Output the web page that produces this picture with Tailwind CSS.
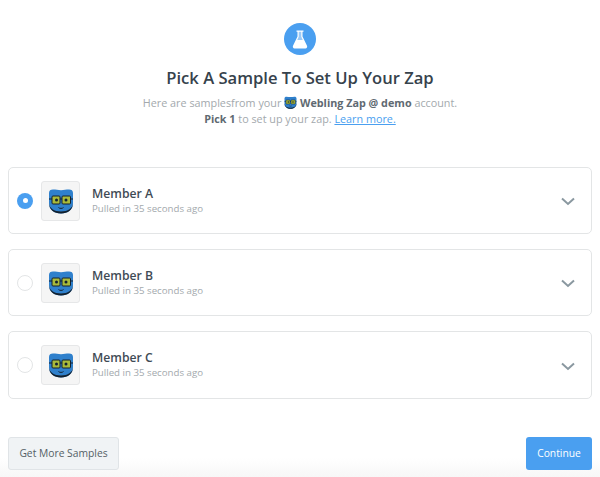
<!DOCTYPE html>
<html lang="en">
<head>
  <meta charset="UTF-8" />
  <title>Pick A Sample</title>
  <script src="https://cdn.jsdelivr.net/npm/@tailwindcss/browser@4"></script>
</head>
<body class="bg-white font-['Open_Sans',sans-serif] text-[#3f4b55]">
  <svg class="hidden">
    <symbol id="bot" viewBox="0 0 26 26">
      <path d="M1 5C1 2.500 2.500 1.500 5 1.500c3 0 5 .7 8 .7s5-.7 8-.7c2.500 0 4 1 4 3.500V15c0 6.500-5 10.500-12 10.500S1 21.500 1 15z" fill="#2f80cc"/>
      <path d="M1 15c.5 5.500 5 8.500 12 8.500S24.500 20.500 25 15c0 6.500-5 10.500-12 10.500S1 21.500 1 15z" fill="#14212e"/>
      <path d="M1 11h3M12 11h2M23 11h2" stroke="#14212e" stroke-width="1"/>
      <rect x="4" y="8" width="8" height="8" rx="1" fill="#a9ba3a" stroke="#14212e" stroke-width="1"/>
      <rect x="14" y="8" width="8.500" height="8" rx="1" fill="#a9ba3a" stroke="#14212e" stroke-width="1"/>
      <circle cx="8.500" cy="12" r="1.500" fill="#14212e"/>
      <circle cx="18" cy="12" r="1.500" fill="#14212e"/>
      <path d="M10.500 19.500c1 1.200 4 1.200 5 0" fill="none" stroke="#14212e" stroke-width="1"/>
    </symbol>
  </svg>

  <main class="flex h-[477px] flex-col overflow-hidden bg-gradient-to-b from-white from-[96%] to-[#f7f7f7] px-2 pt-[23px]">
    <header class="flex flex-col items-center">
      <div class="flex h-[32px] w-[32px] items-center justify-center rounded-full bg-[#4a9ff0]">
        <svg width="16" height="19" viewBox="0 0 16 19">
          <path d="M4.500 .5h7v1.300h-1V6.500L15 15.800c.6 1.300-.2 2.700-1.500 2.700h-11C1.200 18.500.4 17.100 1 15.800L5.500 6.500V1.800h-1z" fill="#fff"/>
          <path d="M6.700 1.800h2.600v5L10.800 10H5.200l1.500-3.200z" fill="#4a9ff0" opacity=".55"/>
        </svg>
      </div>
      <h1 class="mt-[12px] text-[16.600px] leading-[22px] font-semibold text-[#36424c]">Pick A Sample To Set Up Your Zap</h1>
      <p class="mt-[6px] text-center text-[10.800px] leading-[16px] text-[#a3a9ad]">
        Here are samplesfrom your
        <svg class="inline-block h-[13px] w-[13px] align-[-2px]"><use href="#bot"/></svg>
        <b class="font-bold text-[#5f6a72]">Webling Zap @ demo</b> account.<br>
        <b class="font-bold text-[#5f6a72]">Pick 1</b> to set up your zap. <a class="text-[#4a9ff0] underline" href="#">Learn more.</a>
      </p>
    </header>

    <section class="mt-[40px] flex flex-col gap-[15px]">
      <div class="flex h-[67px] items-center rounded-[5px] border border-[#e3e5e6] pr-4 pl-[8px]">
        <span class="flex h-4 w-4 items-center justify-center rounded-full bg-[#4a9ff0]"><span class="h-[5px] w-[5px] rounded-full bg-white"></span></span>
        <span class="ml-[8px] flex h-10 w-[39px] items-center justify-center rounded-[3px] border border-[#e6e7e8] bg-[#f5f5f5]"><svg class="h-[26px] w-[26px]"><use href="#bot"/></svg></span>
        <div class="ml-3 flex-1 pb-[1px]">
          <div class="text-[12.200px] leading-[16px] font-semibold text-[#3f4b55]">Member A</div>
          <div class="text-[9.700px] leading-[13px] text-[#a3a9ad]">Pulled in 35 seconds ago</div>
        </div>
        <svg class="mt-[2px]" width="14" height="9" viewBox="0 0 14 9"><path d="M1 1.500l6 5.500 6-5.500" fill="none" stroke="#8a98a0" stroke-width="2"/></svg>
      </div>
      <div class="flex h-[67px] items-center rounded-[5px] border border-[#e3e5e6] pr-4 pl-[8px]">
        <span class="h-4 w-4 rounded-full border border-[#e3e5e6]"></span>
        <span class="ml-[8px] flex h-10 w-[39px] items-center justify-center rounded-[3px] border border-[#e6e7e8] bg-[#f5f5f5]"><svg class="h-[26px] w-[26px]"><use href="#bot"/></svg></span>
        <div class="ml-3 flex-1 pb-[1px]">
          <div class="text-[12.200px] leading-[16px] font-semibold text-[#3f4b55]">Member B</div>
          <div class="text-[9.700px] leading-[13px] text-[#a3a9ad]">Pulled in 35 seconds ago</div>
        </div>
        <svg class="mt-[2px]" width="14" height="9" viewBox="0 0 14 9"><path d="M1 1.500l6 5.500 6-5.500" fill="none" stroke="#8a98a0" stroke-width="2"/></svg>
      </div>
      <div class="flex h-[68px] items-center rounded-[5px] border border-[#e3e5e6] pr-4 pl-[8px]">
        <span class="h-4 w-4 rounded-full border border-[#e3e5e6]"></span>
        <span class="ml-[8px] flex h-10 w-[39px] items-center justify-center rounded-[3px] border border-[#e6e7e8] bg-[#f5f5f5]"><svg class="h-[26px] w-[26px]"><use href="#bot"/></svg></span>
        <div class="ml-3 flex-1 pb-[2px]">
          <div class="text-[12.200px] leading-[16px] font-semibold text-[#3f4b55]">Member C</div>
          <div class="text-[9.700px] leading-[13px] text-[#a3a9ad]">Pulled in 35 seconds ago</div>
        </div>
        <svg class="mt-[2px]" width="14" height="9" viewBox="0 0 14 9"><path d="M1 1.500l6 5.500 6-5.500" fill="none" stroke="#8a98a0" stroke-width="2"/></svg>
      </div>
    </section>

    <footer class="mt-[38px] flex justify-between">
      <button class="h-[33px] w-[111px] rounded-[3px] border border-[#e0e4e7] bg-[#f0f3f5] text-[10.300px] text-[#555f66]">Get More Samples</button>
      <button class="h-[33px] w-[66px] rounded-[3px] bg-[#4a9ff0] text-[10.300px] font-medium text-white">Continue</button>
    </footer>
  </main>
</body>
</html>
